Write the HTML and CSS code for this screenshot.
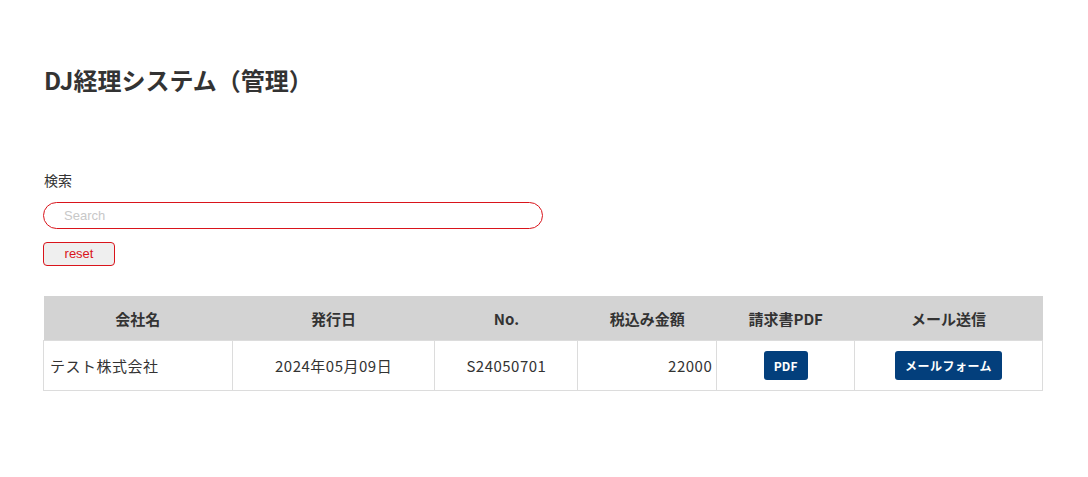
FILE: index.html
```html
<!DOCTYPE html>
<html lang="ja">
<head>
<meta charset="utf-8">
<title>DJ経理システム（管理）</title>
<link rel="stylesheet" href="styles.css">
</head>
<body>
<div class="page">
  <h1 class="title">DJ経理システム（管理）</h1>
  <div class="search">
    <label class="search-label">検索</label>
    <input class="search-input" type="text" placeholder="Search">
    <button class="reset-btn" type="button">reset</button>
  </div>
  <table class="list">
    <thead>
      <tr>
        <th class="c1">会社名</th>
        <th class="c2">発行日</th>
        <th class="c3">No.</th>
        <th class="c4">税込み金額</th>
        <th class="c5">請求書PDF</th>
        <th class="c6">メール送信</th>
      </tr>
    </thead>
    <tbody>
      <tr>
        <td class="left">テスト株式会社</td>
        <td>2024年05月09日</td>
        <td>S24050701</td>
        <td class="right">22000</td>
        <td><a class="btn btn-pdf">PDF</a></td>
        <td><a class="btn btn-mail">メールフォーム</a></td>
      </tr>
    </tbody>
  </table>
</div>
</body>
</html>
```

FILE: styles.css
```css
html, body {
  margin: 0;
  padding: 0;
  background: #fff;
}
body {
  font-family: "Noto Sans CJK JP", "Noto Sans", sans-serif;
  color: #333;
  font-size: 14px;
}
.page {
  padding: 60px 45px 0 43px;
}
.title {
  margin: 0 0 0 1px;
  font-size: 24px;
  font-weight: 700;
  line-height: 40px;
  color: #333;
}
.search {
  display: flex;
  flex-direction: column;
  align-items: flex-start;
  margin-top: 70px;
}
.search-label {
  font-size: 14px;
  line-height: 20px;
  margin-left: 1px;
}
.search-input {
  box-sizing: border-box;
  margin-top: 12px;
  width: 500px;
  height: 27px;
  border: 1px solid #d9141b;
  border-radius: 14px;
  padding: 0 20px;
  font-family: "Liberation Sans", Arial, sans-serif;
  font-size: 13px;
  color: #333;
  background: #fff;
  outline: none;
}
.search-input::placeholder {
  color: #c8c8c8;
}
.reset-btn {
  box-sizing: border-box;
  margin-top: 13px;
  width: 72px;
  height: 24px;
  border: 1px solid #d9141b;
  border-radius: 4px;
  background: #efefef;
  color: #d9141b;
  font-family: "Liberation Sans", Arial, sans-serif;
  font-size: 13px;
  padding: 0 0 2px;
}
.list {
  margin-top: 30px;
  width: 1000px;
  border-collapse: collapse;
}
.list th {
  background: #d3d3d3;
  height: 44px;
  padding: 0;
  font-size: 15px;
  font-weight: 700;
  text-align: center;
}
.list td {
  border: 1px solid #dcdcdc;
  height: 49px;
  padding: 0 6px;
  font-size: 15px;
  letter-spacing: 0.5px;
  text-align: center;
}
.list td.left { text-align: left; }
.list td.right { text-align: right; padding-right: 4px; }
.c1 { width: 189px; }
.c2 { width: 203px; }
.c3 { width: 143px; }
.c4 { width: 139px; }
.c5 { width: 138px; }
.c6 { width: 188px; }
.btn {
  display: inline-block;
  box-sizing: border-box;
  height: 29px;
  line-height: 29px;
  background: #033f7c;
  color: #fff;
  font-size: 12px;
  font-weight: 700;
  letter-spacing: 0;
  border-radius: 3px;
  text-decoration: none;
  vertical-align: middle;
}
.btn-pdf { width: 44px; }
.btn-mail { width: 107px; letter-spacing: 0.5px; }
```
